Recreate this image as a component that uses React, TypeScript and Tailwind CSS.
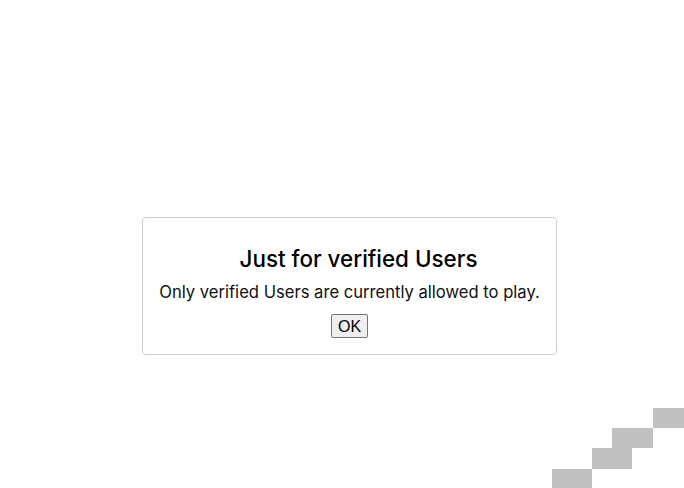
export default function App() {
  return (
    <div className="relative h-[488px] w-full overflow-hidden bg-white">
      <div className="pl-[142px] pt-[217px]">
        <div className="flex h-[138px] w-[415px] flex-col items-center rounded-[4px] border border-[#cfcfcf] pt-[24px]">
          <h2
            className="pl-[18px] text-[22.4px] leading-[34px] font-medium text-black"
            style={{ fontFamily: 'Inter, sans-serif' }}
          >
            Just for verified Users
          </h2>
          <p
            className="mt-[5px] text-[16.6px] leading-[22px] text-[#111]"
            style={{ fontFamily: 'Inter, sans-serif' }}
          >
            Only verified Users are currently allowed to play.
          </p>
          <button
            className="mt-[11px] h-[24px] rounded-[2px] border border-[#767676] bg-[#efefef] px-[6px] text-[16px] leading-[19px] text-black"
            style={{ fontFamily: '"Liberation Sans", Arial, sans-serif' }}
          >
            OK
          </button>
        </div>
      </div>

      {/* staircase decoration in the corner */}
      <div className="absolute bottom-0 right-0 flex flex-col items-end">
        <div className="h-[20px] w-[31px] bg-[#c0c0c0]" />
        <div className="mr-[31px] h-[20px] w-[41px] bg-[#c0c0c0]" />
        <div className="mr-[52px] h-[21px] w-[40px] bg-[#c0c0c0]" />
        <div className="mr-[92px] h-[19px] w-[40px] bg-[#c0c0c0]" />
      </div>
    </div>
  );
}
